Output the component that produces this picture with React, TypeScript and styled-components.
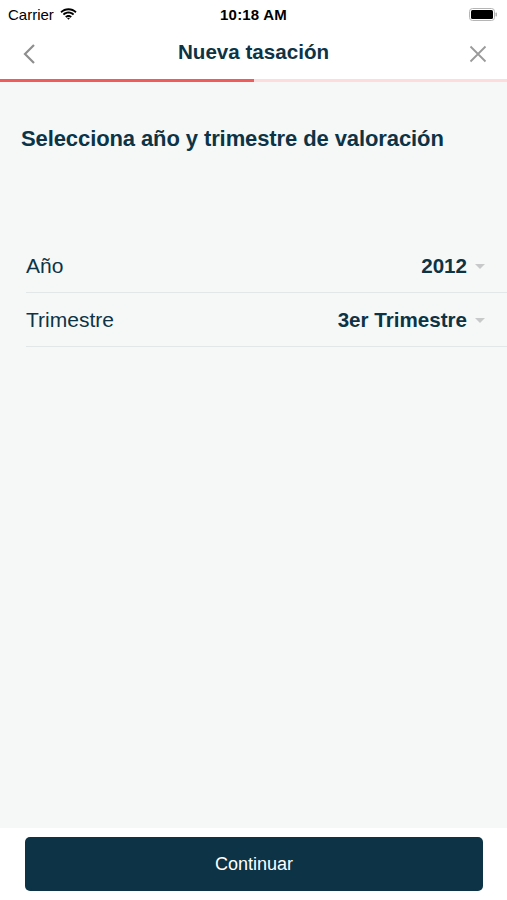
import React from 'react'
import styled, { createGlobalStyle } from 'styled-components'

const colors = {
  navy: '#0c3446',
  grey: '#9a9a9a',
  red: '#f05b5b',
  pink: '#fcdcdc',
  page: '#f6f8f8',
  line: '#e4e7e8',
}

const GlobalStyle = createGlobalStyle`
  html, body {
    margin: 0;
    padding: 0;
    background: #ffffff;
  }
  body {
    font-family: "Liberation Sans", Arial, sans-serif;
    -webkit-font-smoothing: antialiased;
  }
`

const Screen = styled.div`
  width: 507px;
  height: 900px;
  display: flex;
  flex-direction: column;
  background: ${colors.page};
  overflow: hidden;
`

const StatusBar = styled.div`
  height: 28px;
  background: #ffffff;
  display: grid;
  grid-template-columns: 1fr auto 1fr;
  align-items: center;
  padding: 0 8px;
  color: #000;
  font-size: 15px;
`

const Carrier = styled.div`
  display: flex;
  align-items: center;
  gap: 6px;
`

const Time = styled.div`
  font-weight: 600;
  font-size: 15px;
  letter-spacing: 0.2px;
`

const Battery = styled.div`
  justify-self: end;
  display: flex;
  align-items: center;
  padding-right: 1px;
`

const NavBar = styled.div`
  height: 51px;
  background: #ffffff;
  display: grid;
  grid-template-columns: 60px 1fr 60px;
  align-items: center;
`

const NavButton = styled.div<{ $right?: boolean }>`
  display: flex;
  justify-content: ${(p) => (p.$right ? 'flex-end' : 'flex-start')};
  padding: ${(p) => (p.$right ? '0 20px 0 0' : '0 0 0 22px')};
`

const Title = styled.div`
  text-align: center;
  font-weight: 700;
  font-size: 20.6px;
  color: ${colors.navy};
  padding-bottom: 3px;
`

const Progress = styled.div`
  height: 3px;
  background: ${colors.pink};
  display: flex;
`

const ProgressFill = styled.div`
  background: ${colors.red};
`

const Content = styled.div`
  flex: 1;
  display: flex;
  flex-direction: column;
`

const Heading = styled.h1`
  margin: 44px 0 0 21px;
  font-size: 22px;
  font-weight: 700;
  color: ${colors.navy};
  letter-spacing: -0.1px;
`

const List = styled.div`
  margin: 87px 0 0 26px;
  display: flex;
  flex-direction: column;
`

const Row = styled.div`
  height: 53px;
  display: flex;
  align-items: center;
  justify-content: space-between;
  border-bottom: 1px solid ${colors.line};
  padding-right: 22px;
`

const Label = styled.span`
  font-size: 21px;
  color: ${colors.navy};
`

const Value = styled.span`
  display: flex;
  align-items: center;
  gap: 8px;
  font-size: 20.6px;
  font-weight: 700;
  color: ${colors.navy};
`

const Caret = styled.span`
  width: 0;
  height: 0;
  border-left: 5px solid transparent;
  border-right: 5px solid transparent;
  border-top: 5px solid #c7c9ca;
  margin-top: 1px;
`

const Footer = styled.div`
  height: 72px;
  background: #ffffff;
  display: flex;
  padding: 9px 24px 0 25px;
  box-sizing: border-box;
`

const Button = styled.button`
  width: 100%;
  height: 54px;
  border: none;
  border-radius: 5px;
  background: ${colors.navy};
  color: #ffffff;
  font-family: inherit;
  font-size: 18px;
`

const rows = [
  { label: 'Año', value: '2012' },
  { label: 'Trimestre', value: '3er Trimestre' },
]

const App: React.FunctionComponent = () => {
  return (
    <>
      <GlobalStyle />
      <Screen>
        <StatusBar>
          <Carrier>
            Carrier
            <svg width="17" height="12" viewBox="0 0 17 12">
              <path d="M8.5 2.2c2.6 0 5 1 6.8 2.7l1.3-1.4C14.4 1.4 11.6.2 8.5.2S2.6 1.4.4 3.5l1.3 1.4C3.5 3.2 5.9 2.2 8.5 2.2z" fill="#000" />
              <path d="M8.5 5.6c1.7 0 3.2.6 4.4 1.7l1.3-1.4C12.7 4.5 10.7 3.6 8.5 3.6S4.3 4.5 2.8 5.9l1.3 1.4C5.3 6.2 6.8 5.6 8.5 5.6z" fill="#000" />
              <path d="M8.5 9c.8 0 1.5.3 2 .8l1.3-1.4C11 7.6 9.8 7 8.5 7S6 7.6 5.2 8.4l1.3 1.4c.5-.5 1.2-.8 2-.8zM8.5 11.8l1.4-1.5c-.4-.3-.9-.5-1.4-.5s-1 .2-1.4.5z" fill="#000" />
            </svg>
          </Carrier>
          <Time>10:18 AM</Time>
          <Battery>
            <svg width="29" height="13" viewBox="0 0 29 13">
              <rect x="0.5" y="0.5" width="25" height="12" rx="3" fill="none" stroke="#b5b5b5" />
              <rect x="2" y="2" width="22" height="9" rx="1.5" fill="#000" />
              <rect x="26.5" y="4.5" width="1.5" height="4" rx="0.7" fill="#b5b5b5" />
            </svg>
          </Battery>
        </StatusBar>
        <NavBar>
          <NavButton>
            <svg width="14" height="22" viewBox="0 0 14 22">
              <path d="M12 2 L3 11 L12 20" fill="none" stroke="#8e8e8e" strokeWidth="2.2" />
            </svg>
          </NavButton>
          <Title>Nueva tasación</Title>
          <NavButton $right>
            <svg width="18" height="18" viewBox="0 0 18 18">
              <path d="M1.5 1.5 L16.5 16.5 M16.5 1.5 L1.5 16.5" stroke="#9a9a9a" strokeWidth="1.8" />
            </svg>
          </NavButton>
        </NavBar>
        <Progress>
          <ProgressFill style={{ width: '50%' }} />
        </Progress>
        <Content>
          <Heading>Selecciona año y trimestre de valoración</Heading>
          <List>
            {rows.map((row) => (
              <Row key={row.label}>
                <Label>{row.label}</Label>
                <Value>
                  {row.value}
                  <Caret />
                </Value>
              </Row>
            ))}
          </List>
        </Content>
        <Footer>
          <Button>Continuar</Button>
        </Footer>
      </Screen>
    </>
  )
}

export default App
